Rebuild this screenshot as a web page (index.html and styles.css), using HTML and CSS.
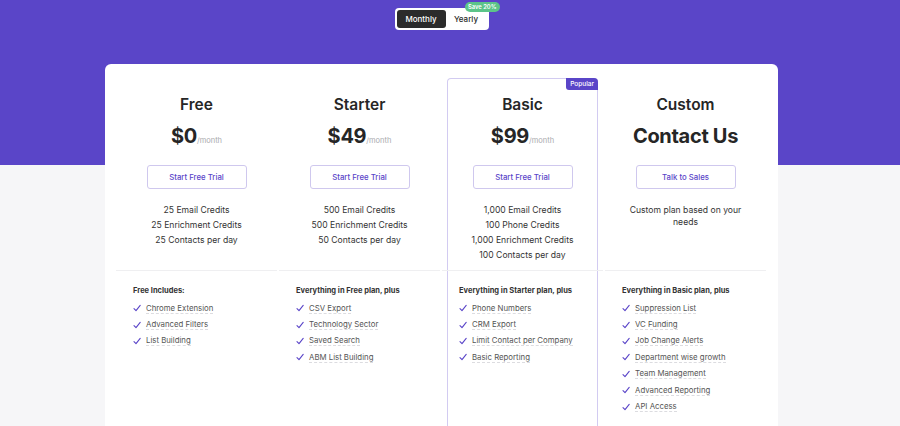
FILE: index.html
```html
<!DOCTYPE html>
<html lang="en">
<head>
<meta charset="utf-8">
<title>Pricing</title>
<link rel="stylesheet" href="styles.css">
</head>
<body>
<div class="page">
  <div class="toggle">
    <span class="opt active">Monthly</span>
    <span class="opt">Yearly</span>
    <span class="save">Save 20%</span>
  </div>

  <div class="card">
    <div class="plan">
      <div class="plan-top">
        <div class="name">Free</div>
        <div class="price">$0<span class="per">/month</span></div>
        <a class="btn">Start Free Trial</a>
        <ul class="credits">
          <li>25 Email Credits</li>
          <li>25 Enrichment Credits</li>
          <li>25 Contacts per day</li>
        </ul>
      </div>
      <div class="features">
        <div class="ftitle">Free Includes:</div>
        <ul class="flist">
          <li><svg class="chk" viewBox="0 0 8 8"><path d="M1 4.6 L3 6.6 L7.2 1.4"/></svg><span>Chrome Extension</span></li>
          <li><svg class="chk" viewBox="0 0 8 8"><path d="M1 4.6 L3 6.6 L7.2 1.4"/></svg><span>Advanced Filters</span></li>
          <li><svg class="chk" viewBox="0 0 8 8"><path d="M1 4.6 L3 6.6 L7.2 1.4"/></svg><span>List Building</span></li>
        </ul>
      </div>
    </div>

    <div class="plan">
      <div class="plan-top">
        <div class="name">Starter</div>
        <div class="price">$49<span class="per">/month</span></div>
        <a class="btn">Start Free Trial</a>
        <ul class="credits">
          <li>500 Email Credits</li>
          <li>500 Enrichment Credits</li>
          <li>50 Contacts per day</li>
        </ul>
      </div>
      <div class="features">
        <div class="ftitle">Everything in Free plan, plus</div>
        <ul class="flist">
          <li><svg class="chk" viewBox="0 0 8 8"><path d="M1 4.6 L3 6.6 L7.2 1.4"/></svg><span>CSV Export</span></li>
          <li><svg class="chk" viewBox="0 0 8 8"><path d="M1 4.6 L3 6.6 L7.2 1.4"/></svg><span>Technology Sector</span></li>
          <li><svg class="chk" viewBox="0 0 8 8"><path d="M1 4.6 L3 6.6 L7.2 1.4"/></svg><span>Saved Search</span></li>
          <li><svg class="chk" viewBox="0 0 8 8"><path d="M1 4.6 L3 6.6 L7.2 1.4"/></svg><span>ABM List Building</span></li>
        </ul>
      </div>
    </div>

    <div class="plan popular">
      <span class="badge">Popular</span>
      <div class="plan-top">
        <div class="name">Basic</div>
        <div class="price">$99<span class="per">/month</span></div>
        <a class="btn">Start Free Trial</a>
        <ul class="credits">
          <li>1,000 Email Credits</li>
          <li>100 Phone Credits</li>
          <li>1,000 Enrichment Credits</li>
          <li>100 Contacts per day</li>
        </ul>
      </div>
      <div class="features">
        <div class="ftitle">Everything in Starter plan, plus</div>
        <ul class="flist">
          <li><svg class="chk" viewBox="0 0 8 8"><path d="M1 4.6 L3 6.6 L7.2 1.4"/></svg><span>Phone Numbers</span></li>
          <li><svg class="chk" viewBox="0 0 8 8"><path d="M1 4.6 L3 6.6 L7.2 1.4"/></svg><span>CRM Export</span></li>
          <li><svg class="chk" viewBox="0 0 8 8"><path d="M1 4.6 L3 6.6 L7.2 1.4"/></svg><span>Limit Contact per Company</span></li>
          <li><svg class="chk" viewBox="0 0 8 8"><path d="M1 4.6 L3 6.6 L7.2 1.4"/></svg><span>Basic Reporting</span></li>
        </ul>
      </div>
    </div>

    <div class="plan">
      <div class="plan-top">
        <div class="name">Custom</div>
        <div class="price">Contact Us</div>
        <a class="btn">Talk to Sales</a>
        <p class="desc">Custom plan based on your needs</p>
      </div>
      <div class="features">
        <div class="ftitle">Everything in Basic plan, plus</div>
        <ul class="flist">
          <li><svg class="chk" viewBox="0 0 8 8"><path d="M1 4.6 L3 6.6 L7.2 1.4"/></svg><span>Suppression List</span></li>
          <li><svg class="chk" viewBox="0 0 8 8"><path d="M1 4.6 L3 6.6 L7.2 1.4"/></svg><span>VC Funding</span></li>
          <li><svg class="chk" viewBox="0 0 8 8"><path d="M1 4.6 L3 6.6 L7.2 1.4"/></svg><span>Job Change Alerts</span></li>
          <li><svg class="chk" viewBox="0 0 8 8"><path d="M1 4.6 L3 6.6 L7.2 1.4"/></svg><span>Department wise growth</span></li>
          <li><svg class="chk" viewBox="0 0 8 8"><path d="M1 4.6 L3 6.6 L7.2 1.4"/></svg><span>Team Management</span></li>
          <li><svg class="chk" viewBox="0 0 8 8"><path d="M1 4.6 L3 6.6 L7.2 1.4"/></svg><span>Advanced Reporting</span></li>
          <li><svg class="chk" viewBox="0 0 8 8"><path d="M1 4.6 L3 6.6 L7.2 1.4"/></svg><span>API Access</span></li>
        </ul>
      </div>
    </div>
  </div>
</div>
</body>
</html>
```

FILE: styles.css
```css
* { box-sizing: border-box; }

html, body {
  margin: 0;
  padding: 0;
  height: 426px;
  overflow: hidden;
}

body {
  font-family: Inter, "Liberation Sans", sans-serif;
  color: #2b2b2b;
  background: linear-gradient(#5a45c8 0, #5a45c8 165px, #f6f6f8 165px);
}

.page {
  width: 883px;
  height: 426px;
  overflow: hidden;
  display: flex;
  flex-direction: column;
  align-items: center;
  padding-top: 8px;
}

.toggle {
  position: relative;
  width: 94px;
  height: 22px;
  background: #fff;
  border-radius: 4px;
  padding: 2px;
  display: flex;
  align-items: center;
}

.opt {
  flex: 1;
  height: 18px;
  display: flex;
  align-items: center;
  justify-content: center;
  font-size: 8px;
  font-weight: 500;
  color: #2a2a2a;
}

.opt.active {
  flex: 0 0 49px;
  background: #2b2b2b;
  color: #fff;
  border-radius: 3px;
}

.save {
  position: absolute;
  top: -6px;
  right: -11px;
  height: 10px;
  padding: 0 3px;
  background: #5cc489;
  color: #fff;
  font-size: 5.8px;
  font-weight: 600;
  line-height: 10px;
  border-radius: 5px;
}

.card {
  margin-top: 34px;
  width: 673px;
  height: 362px;
  flex-shrink: 0;
  background: #fff;
  border-radius: 6px 6px 0 0;
  padding: 14px 16px 0;
  display: flex;
  gap: 12px;
}

.plan {
  position: relative;
  flex: 0 0 151px;
  border: 1px solid transparent;
  border-bottom: 0;
  border-radius: 4px 4px 0 0;
  display: flex;
  flex-direction: column;
}

.plan.popular {
  border-color: #d2cbf1;
}

.badge {
  position: absolute;
  top: -1px;
  right: -1px;
  height: 12px;
  padding: 0 4px;
  background: #5a45c8;
  color: #fff;
  font-size: 6.5px;
  font-weight: 500;
  line-height: 12px;
  border-radius: 0 4px 0 3px;
}

.plan-top {
  height: 192px;
  margin: 0 -6px;
  border-bottom: 1px solid #efeff1;
  display: flex;
  flex-direction: column;
  align-items: center;
  padding-top: 16px;
}

.name {
  font-size: 15.5px;
  font-weight: 600;
  line-height: 20px;
  color: #262626;
}

.price {
  margin-top: 7px;
  height: 28px;
  font-size: 20px;
  font-weight: 700;
  line-height: 28px;
  color: #262626;
  letter-spacing: -0.3px;
}

.per {
  font-size: 7.5px;
  font-weight: 400;
  line-height: 1;
  color: #a9a9ad;
  letter-spacing: 0;
}

.btn {
  margin-top: 15px;
  width: 100px;
  height: 24px;
  flex-shrink: 0;
  border: 1px solid #cfc8ee;
  border-radius: 3px;
  display: flex;
  align-items: center;
  justify-content: center;
  font-size: 7.8px;
  font-weight: 500;
  color: #5a45c8;
}

.credits {
  list-style: none;
  margin: 14px 0 0;
  padding: 0;
  text-align: center;
  font-size: 8.6px;
  line-height: 15px;
  color: #333;
}

.desc {
  margin: 15px 0 0;
  width: 130px;
  text-align: center;
  font-size: 8.6px;
  line-height: 12px;
  color: #333;
}

.features {
  padding: 14px 0 0 11px;
}

.ftitle {
  font-size: 7.5px;
  font-weight: 700;
  line-height: 12px;
  color: #333;
}

.flist {
  list-style: none;
  margin: 3px 0 0;
  padding: 0;
}

.flist li {
  height: 16.4px;
  display: flex;
  align-items: center;
  gap: 5px;
  font-size: 7.8px;
  color: #555;
}

.flist span {
  line-height: 10px;
  border-bottom: 1px dashed #dcdce0;
}

.chk {
  width: 8px;
  height: 8px;
  fill: none;
  stroke: #5a45c8;
  stroke-width: 1.1;
  stroke-linecap: round;
  stroke-linejoin: round;
}
```
